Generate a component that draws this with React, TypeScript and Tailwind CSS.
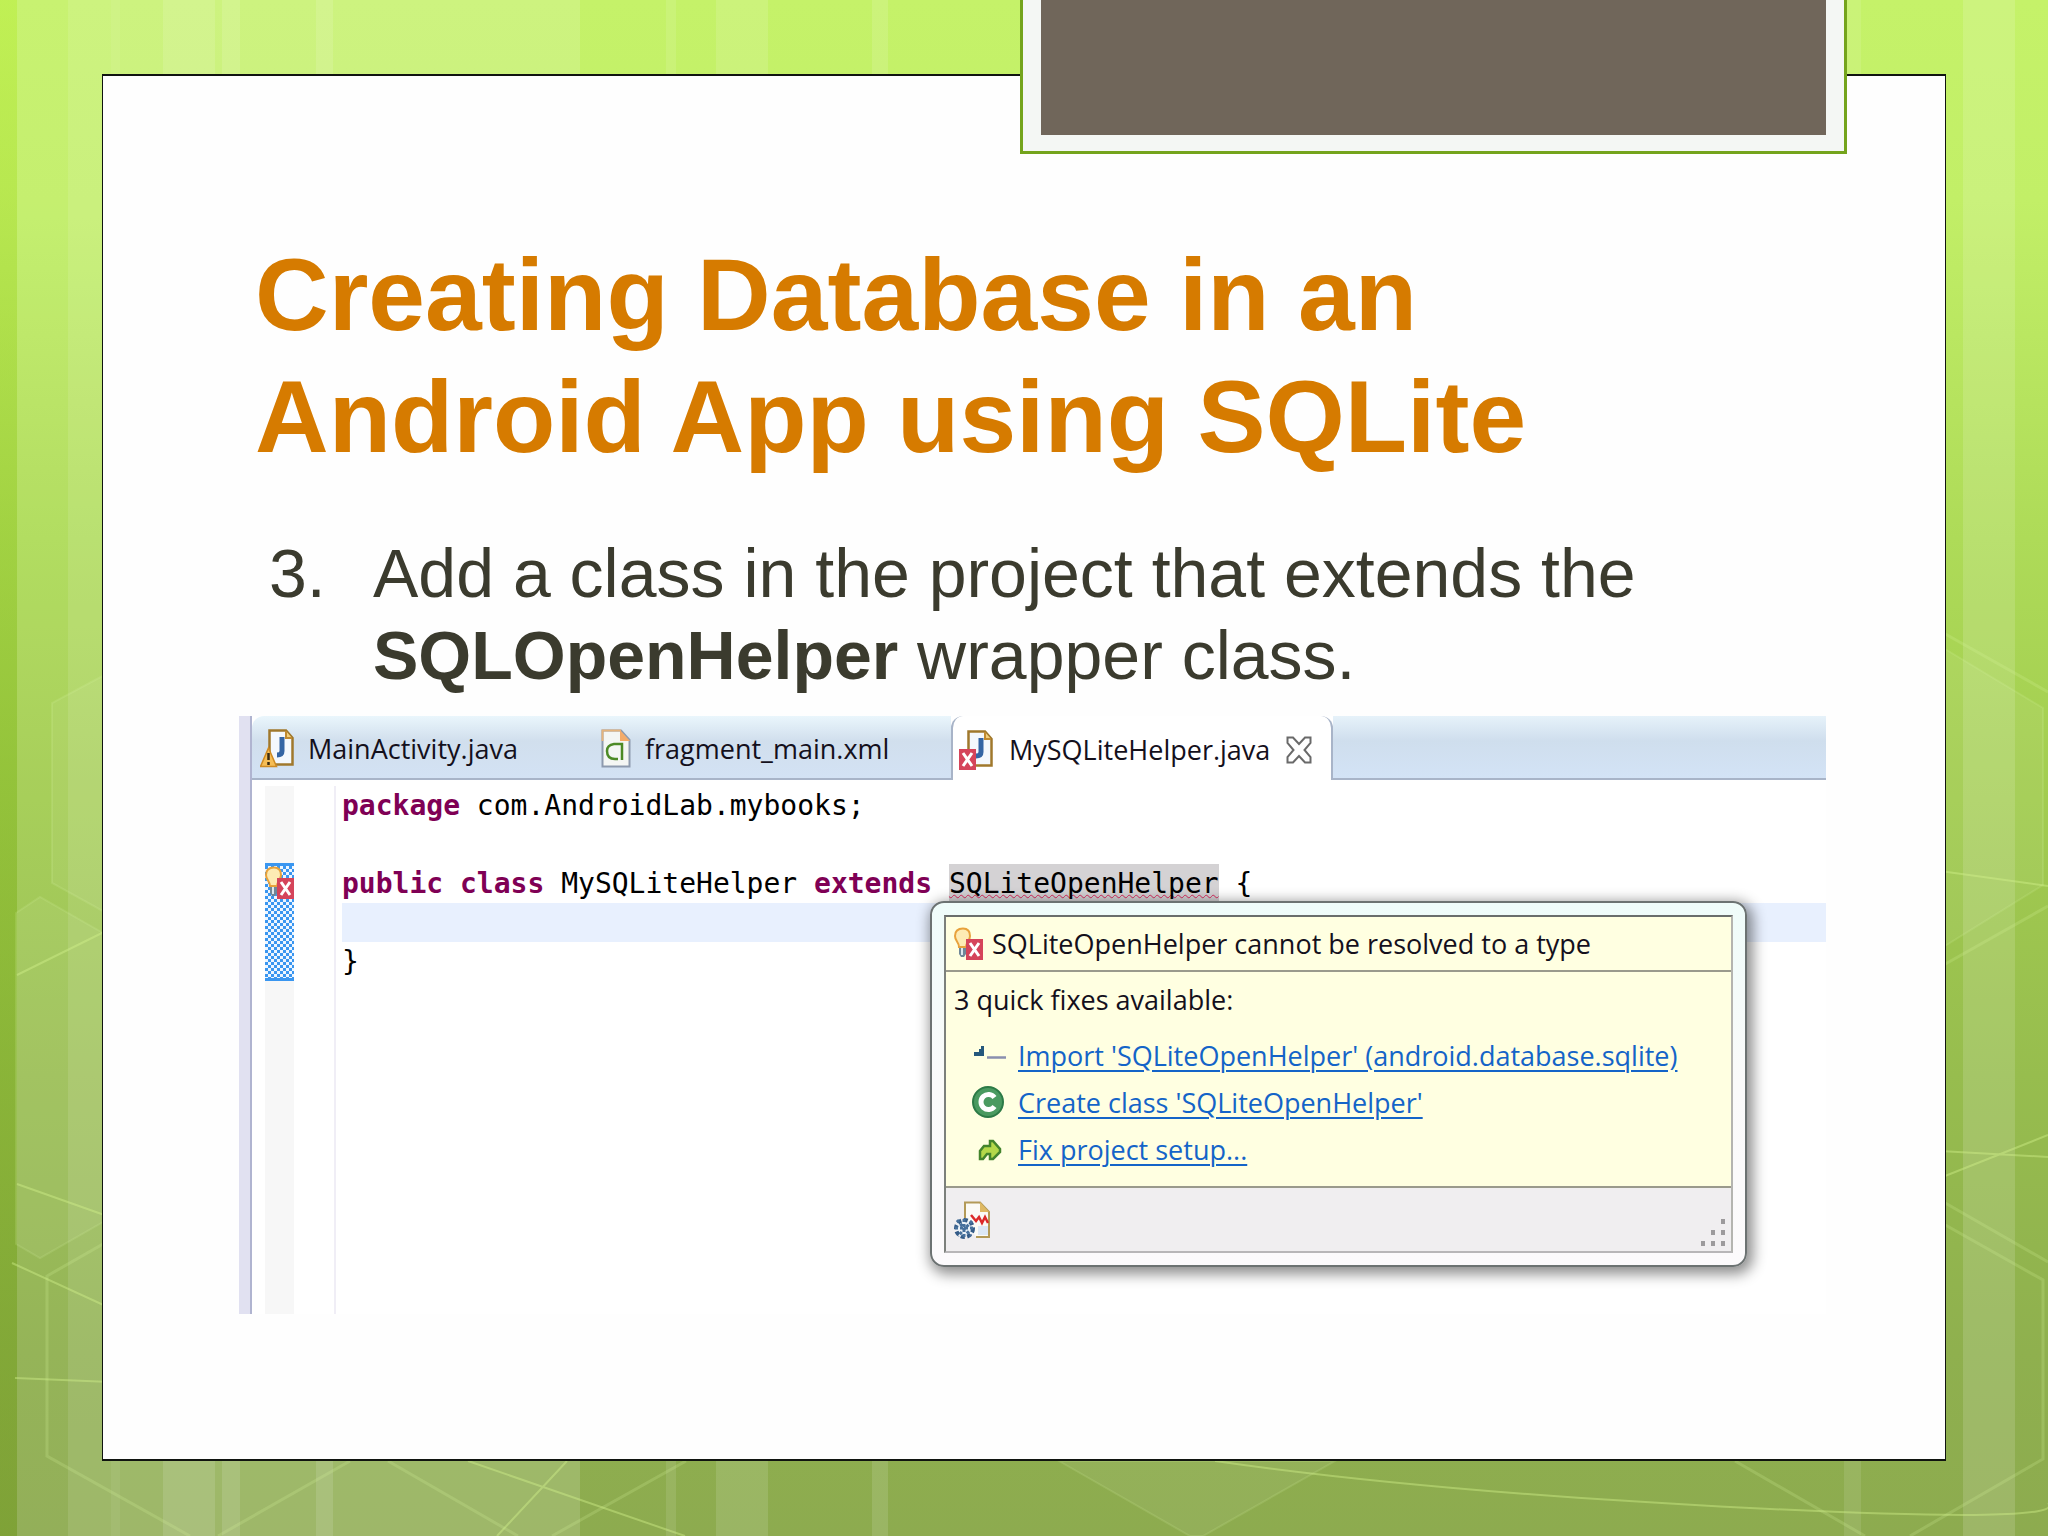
import type { ReactNode } from "react";

const stripes = [
  { x: 17, width: 563, opacity: 0.06 },
  { x: 68, width: 512, opacity: 0.1 },
  { x: 111, width: 9, opacity: 0.06 },
  { x: 163, width: 52, opacity: 0.12 },
  { x: 222, width: 18, opacity: 0.12 },
  { x: 316, width: 17, opacity: 0.12 },
  { x: 666, width: 10, opacity: 0.1 },
  { x: 716, width: 52, opacity: 0.12 },
  { x: 872, width: 16, opacity: 0.12 },
  { x: 1844, width: 17, opacity: 0.1 },
  { x: 1963, width: 52, opacity: 0.14 },
];

function Backdrop() {
  return (
    <svg
      aria-hidden="true"
      viewBox="0 0 2048 1536"
      preserveAspectRatio="none"
      className="absolute inset-0 h-full w-full"
    >
      <defs>
        <linearGradient id="leaf" x1="0" y1="0" x2="0" y2="1">
          <stop offset="0" stopColor="#c5f269" />
          <stop offset="0.13" stopColor="#c2ef67" />
          <stop offset="0.35" stopColor="#aedb58" />
          <stop offset="0.52" stopColor="#a2cc50" />
          <stop offset="0.7" stopColor="#97bd4e" />
          <stop offset="0.88" stopColor="#8fb04e" />
          <stop offset="1" stopColor="#8dab4f" />
        </linearGradient>
        <linearGradient id="edge" x1="0" y1="0" x2="0" y2="1">
          <stop offset="0" stopColor="#bcee40" stopOpacity="0.5" />
          <stop offset="0.5" stopColor="#7eb41a" stopOpacity="0.4" />
          <stop offset="1" stopColor="#6a9414" stopOpacity="0.4" />
        </linearGradient>
      </defs>
      <rect width="2048" height="1536" fill="url(#leaf)" />
      <rect width="17" height="1536" fill="url(#edge)" />
      {stripes.map((s) => (
        <rect
          key={s.x}
          x={s.x}
          width={s.width}
          height="1536"
          fill="#fff"
          opacity={s.opacity}
        />
      ))}
      <g fill="#fff" fillOpacity="0.06" stroke="#e4ffb0" strokeOpacity="0.14" strokeWidth="2">
        <path d="M110 672 52 703V883L110 915Z" />
        <path d="M16 913 40 897 110 937V1218L40 1258 16 1244Z" />
        <path d="M1940 646 2043 708V885L1940 949Z" />
        <path d="M1059 1461 1190 1536H1203L1335 1461Z" />
      </g>
      <g fill="none" stroke="#dcfaa0" strokeOpacity="0.2" strokeWidth="3">
        <path d="M110 1240 47 1276V1456L190 1536" />
        <path d="M350 1461 218 1536M388 1461 518 1536M686 1461 552 1536" />
        <path d="M1735 1461 1865 1536M1940 1222 2043 1280V1459L1910 1536" />
        <path d="M1940 631 2048 692M1940 967 2048 906M1940 1200 2048 1262" />
      </g>
      <g fill="none" stroke="#d4f48c" strokeOpacity="0.42" strokeWidth="2">
        <path d="M17 975 110 929M17 1184 110 1217M12 1263 110 1308M15 1378 110 1382" />
        <path d="M468 1461 685 1536M567 1461 497 1536" />
        <path d="M1215 1461Q1430 1492 1750 1508T2048 1503" />
        <path d="M1940 871 2048 886M1940 1151 2048 1157M1940 1178 2048 1135" />
      </g>
    </svg>
  );
}

function JavaFile() {
  return (
    <>
      <path d="M9.500 1.500H26L32.500 9V35.500H9.500Z" fill="#f4f8fd" stroke="#a0782c" strokeWidth="2.500" />
      <path d="M26 2V9H32" fill="#f3cf7c" stroke="#c08a30" strokeWidth="2" />
      <path d="M22 8V22Q22 26 17 26" fill="none" stroke="#3465a4" strokeWidth="5" />
    </>
  );
}

function ErrorMark({ x, y }: { x: number; y: number }) {
  return (
    <g>
      <rect x={x} y={y} width="17" height="21" fill="#d5445a" />
      <path
        d={`M${x + 4} ${y + 4}l9 13m0-13l-9 13`}
        stroke="#fff"
        strokeWidth="3"
      />
    </g>
  );
}

function WarningFileIcon() {
  return (
    <svg aria-hidden="true" viewBox="0 0 34 40" className="h-10 w-[34px] shrink-0">
      <JavaFile />
      <path d="M8.500 19 16.500 37.500H0.500Z" fill="#f6bd55" stroke="#cf8a22" strokeWidth="1.500" />
      <path d="M8.500 24V31M8.500 33V36" stroke="#3a2a10" strokeWidth="2.500" />
    </svg>
  );
}

function ErrorFileIcon() {
  return (
    <svg aria-hidden="true" viewBox="0 0 34 40" className="h-10 w-[34px] shrink-0">
      <JavaFile />
      <ErrorMark x={0} y={19} />
    </svg>
  );
}

function XmlFileIcon() {
  return (
    <svg aria-hidden="true" viewBox="0 0 30 40" className="h-10 w-[30px] shrink-0">
      <path d="M1.500 1.500H20L28.500 11V37.500H1.500Z" fill="#f4f6f4" stroke="#8d9aae" strokeWidth="2" />
      <path d="M1.500 12V1.500H20" fill="none" stroke="#e5b47c" strokeWidth="2" />
      <path d="M19 1 29 12H19Z" fill="#f3ab6a" />
      <path d="M21 31V15H13Q6 16 6 22Q6 30 14 30H17" fill="none" stroke="#4c8a26" strokeWidth="2.500" />
    </svg>
  );
}

function BulbErrorIcon() {
  return (
    <svg aria-hidden="true" viewBox="0 0 30 34" className="h-[34px] w-[30px] shrink-0">
      <path
        d="M9 1.500C3 1.500 1 5 1 9C1 14 5 15 5 20H12C12 15 16 14 16 9C16 5 14 1.500 9 1.500Z"
        fill="#fdebb4"
        stroke="#e8a23c"
        strokeWidth="2"
      />
      <path d="M5 21H12V27L10 30H7L5 27Z" fill="#6f8798" />
      <path d="M8 21V28" stroke="#dfe8ee" strokeWidth="2" />
      <ErrorMark x={12} y={12} />
    </svg>
  );
}

function CloseIcon() {
  return (
    <svg aria-hidden="true" viewBox="0 0 26 28" className="h-7 w-[26px]">
      <path
        d="M1.500 1.500H7L13 8 19 1.500H24.500V7L18.500 14 24.500 21V26.500H19L13 20 7 26.500H1.500V21L7.500 14 1.500 7Z"
        fill="#fff"
        stroke="#6a6a6a"
        strokeWidth="2"
      />
    </svg>
  );
}

function ImportIcon() {
  return (
    <svg aria-hidden="true" viewBox="0 0 34 34" className="h-[34px] w-[34px]">
      <path d="M2 17H12V7H9V10H7V13H2Z" fill="#25587c" />
      <path d="M15 18.500H34" stroke="#8a8fae" strokeWidth="2.500" />
    </svg>
  );
}

function ClassIcon() {
  return (
    <svg aria-hidden="true" viewBox="0 0 34 34" className="h-[34px] w-[34px]">
      <circle cx="16" cy="16" r="15" fill="#4a9a60" stroke="#2c7a46" strokeWidth="2" />
      <path d="M22.500 11.500A7.500 7.500 0 1 0 22.500 20.500" fill="none" stroke="#fff" strokeWidth="5" />
    </svg>
  );
}

function FixIcon() {
  return (
    <svg aria-hidden="true" viewBox="0 0 34 34" className="h-[34px] w-[34px]">
      <path
        d="M8 26V18L12 13H18V8H21L28 16V19L21 26H18V21H15L11 26Z"
        fill="#b4d84a"
        stroke="#43842c"
        strokeWidth="2.500"
      />
    </svg>
  );
}

function PreferencesIcon() {
  return (
    <svg aria-hidden="true" viewBox="0 0 36 40" className="h-10 w-9">
      <path d="M11 18V2.500H26L35 12V37H22" fill="#fbfaf6" stroke="#b39a58" strokeWidth="2" />
      <path d="M26 2V12H35Z" fill="#dfb964" />
      <path d="M17 15 22 21 25 17 28 23 31 17 34 23" fill="none" stroke="#dc2a2a" strokeWidth="2.500" />
      <path d="M24 26H34V35H24Z" fill="#dce8f6" />
      <circle cx="10.500" cy="28.500" r="8.500" fill="#eef3f8" stroke="#335a86" strokeWidth="4" strokeDasharray="4 2.500" />
      <path d="M3 20 17 36M18 21 4 36M10 19V38M1 28H20" stroke="#47709c" strokeWidth="3" strokeDasharray="3 2" />
    </svg>
  );
}

function Keyword({ children }: { children: ReactNode }) {
  return <b className="text-[#7f0055]">{children}</b>;
}

const quickFixes = [
  { icon: <ImportIcon />, label: "Import 'SQLiteOpenHelper' (android.database.sqlite)" },
  { icon: <ClassIcon />, label: "Create class 'SQLiteOpenHelper'" },
  { icon: <FixIcon />, label: "Fix project setup..." },
];

function QuickFixPopup() {
  return (
    <div className="absolute top-[185px] left-[691px] w-[817px] rounded-[14px] border-2 border-[#6c7272] bg-linear-to-b from-[#effcfa] via-[#fafafa] to-[#fcfafc] p-3 shadow-[3px_4px_14px_3px_rgba(0,0,0,0.45)]">
      <div className="border-2 border-t-[#6a6e6c] border-r-[#b4b4b0] border-b-[#b8b6b8] border-l-[#7c807c] bg-[#ffffe1]">
        <div className="flex h-[55px] items-center gap-2 border-b-2 border-[#9a9a8c] pl-2">
          <BulbErrorIcon />
          <p>SQLiteOpenHelper cannot be resolved to a type</p>
        </div>
        <div className="h-[216px] border-b-2 border-[#9a9a8c] pt-1.5 pl-2">
          <p className="leading-[44px]">3 quick fixes available:</p>
          <ul className="pt-2.5 pl-[18px]">
            {quickFixes.map((fix) => (
              <li key={fix.label} className="flex h-[47px] items-center gap-3">
                {fix.icon}
                <a
                  href="#"
                  className="text-[#1464c8] underline decoration-2 underline-offset-4"
                >
                  {fix.label}
                </a>
              </li>
            ))}
          </ul>
        </div>
        <div className="flex h-[63px] items-center justify-between bg-[#f0eef0] pr-1 pl-2">
          <button type="button" aria-label="Configure problem severity">
            <PreferencesIcon />
          </button>
          <svg aria-hidden="true" viewBox="0 0 26 28" className="mt-auto mb-1 h-7 w-[26px]">
            <path
              d="M20 0h4v5h-4zM10 11h4v5h-4zM20 11h4v5h-4zM0 22h4v5h-4zM10 22h4v5h-4zM20 22h4v5h-4z"
              fill="#9c9a9c"
            />
          </svg>
        </div>
      </div>
    </div>
  );
}

function EditorTabs() {
  return (
    <div role="tablist" className="flex h-16">
      <div className="flex w-[699px] shrink-0 rounded-tl-xl border-b-2 border-[#a8b4c8] bg-linear-to-b from-[#eaf6fc] via-[#d1dfed] via-40% to-[#d3e2f4]">
        <button
          type="button"
          role="tab"
          aria-selected="false"
          className="flex w-[341px] items-center gap-[14px] pt-1 pl-2"
        >
          <WarningFileIcon />
          MainActivity.java
        </button>
        <button
          type="button"
          role="tab"
          aria-selected="false"
          className="flex items-center gap-[14px] pt-1 pl-2"
        >
          <XmlFileIcon />
          fragment_main.xml
        </button>
      </div>
      <div className="flex w-[382px] shrink-0 items-center rounded-t-xl border-x-2 border-[#a8b4c8] bg-white pt-1 pl-1.5">
        <button
          type="button"
          role="tab"
          aria-selected="true"
          className="flex items-center gap-4"
        >
          <ErrorFileIcon />
          MySQLiteHelper.java
        </button>
        <button type="button" aria-label="Close tab" className="ml-4">
          <CloseIcon />
        </button>
      </div>
      <div className="flex-1 border-b-2 border-[#a8b4c8] bg-linear-to-b from-[#e6f2fa] via-[#cfdeed] via-40% to-[#d3e3f6]" />
    </div>
  );
}

function Editor() {
  return (
    <div className="relative flex font-['Open_Sans',sans-serif] text-[27px] leading-9 text-[#14101c]">
      <div className="w-[13px] border-r-2 border-[#b0b4d0] bg-[#e1e1f1]" />
      <div className="min-w-0 flex-1 bg-white">
        <EditorTabs />
        <div className="flex h-[534px] pt-1.5 pl-[13px]">
          <div className="w-[29px] bg-[#f7f7f7] pt-[77px]">
            <div className="relative h-[118px] border-y-3 border-[#3a96f0]">
              <svg aria-hidden="true" className="h-full w-full">
                <pattern id="hatch" width="6" height="6" patternUnits="userSpaceOnUse">
                  <rect width="6" height="6" fill="#eef6ff" />
                  <path d="M0 0h3v3h-3zM3 3h3v3h-3z" fill="#3a96f0" />
                </pattern>
                <rect width="100%" height="100%" fill="url(#hatch)" />
              </svg>
              <div className="absolute top-0 left-0">
                <BulbErrorIcon />
              </div>
            </div>
          </div>
          <div className="ml-10 w-2 border-l-2 border-[#f0eef6]" />
          <pre className="flex-1 text-[28px] leading-[39px] text-black">
            <code className="block font-['DejaVu_Sans_Mono',monospace]">
              <span className="block">
                <Keyword>package</Keyword> com.AndroidLab.mybooks;
              </span>
              <span className="block h-[39px]" />
              <span className="block h-[39px]">
                <Keyword>public</Keyword> <Keyword>class</Keyword> MySQLiteHelper{" "}
                <Keyword>extends</Keyword>{" "}
                <span className="inline-block bg-[#d4d2d4] underline decoration-[#d8285c] decoration-wavy decoration-1 underline-offset-1 [text-decoration-skip-ink:none]">
                  SQLiteOpenHelper
                </span>
                {" {"}
              </span>
              <span className="block h-[39px] bg-[#e8f0fe]" />
              <span className="block">{"}"}</span>
            </code>
          </pre>
        </div>
      </div>
      <QuickFixPopup />
    </div>
  );
}

export default function App() {
  return (
    <div className="relative flex min-h-screen flex-col bg-[#a2cc50] font-['Liberation_Sans',Arial,sans-serif]">
      <Backdrop />
      <main className="relative mx-[102px] mt-[74px] mb-[75px] flex-1 border-x border-y-2 border-[#101410] bg-[#fefefe] pt-[158px] pr-[119px] pl-[136px]">
        <h1 className="max-w-[1400px] pl-4 text-[102px] leading-[122px] font-bold text-[#d67b00]">
          Creating Database in an Android App using SQLite
        </h1>
        <ol className="mt-[54px] mb-5 pl-[30px] text-[68px] leading-[82px] text-[#3b3b2e]">
          <li className="flex">
            <span className="w-[104px] shrink-0">3.</span>
            <p className="max-w-[1320px]">
              Add a class in the project that extends the{" "}
              <strong>SQLOpenHelper</strong> wrapper class.
            </p>
          </li>
        </ol>
        <Editor />
      </main>
      <div className="absolute top-0 right-[201px] h-[154px] w-[827px] border-3 border-t-0 border-[#74a41c] bg-[#f4f7f4] px-[18px] pb-4">
        <div className="h-full bg-[#70665a]" />
      </div>
    </div>
  );
}
